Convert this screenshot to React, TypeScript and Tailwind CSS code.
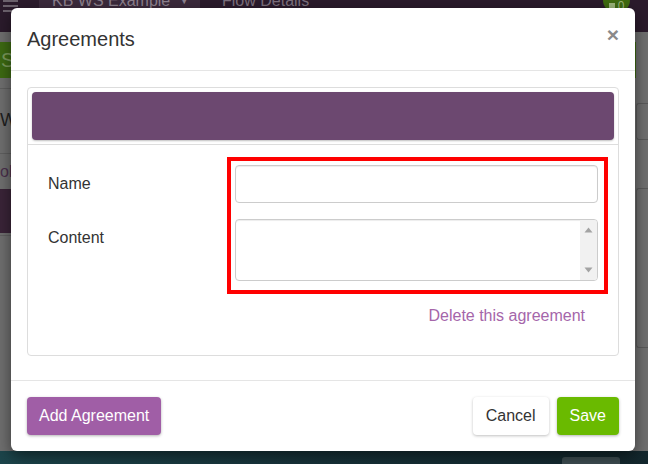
import React from 'react';

const font = { fontFamily: '"Liberation Sans", Arial, sans-serif' };

const Backdrop = () => {
  return (
    <div className="flex h-[464px] w-[648px] flex-col bg-[#6f6f6f]">
      {/* top app bar, dimmed by the modal overlay */}
      <div className="flex h-[32px] items-start overflow-hidden bg-[#2b1b2c]">
        <div className="flex w-[26px] flex-col gap-[3px] pl-[3px]">
          <span className="h-[2px] w-[15px] bg-[#6c626d]" />
          <span className="h-[2px] w-[15px] bg-[#6c626d]" />
          <span className="h-[2px] w-[15px] bg-[#6c626d]" />
        </div>
        <div className="ml-[13px] flex h-[22px] w-[161px] items-start whitespace-nowrap bg-[#3b2a3c] pl-[13px] text-[16px] leading-[22px] text-[#8d818e]">
          <span className="-mt-[10px]">KB WS Example</span>
          <span className="-mt-[10px] ml-[9px] text-[10px]">▼</span>
        </div>
        <div className="ml-[22px] flex h-[22px] items-start whitespace-nowrap text-[16px] leading-[22px] text-[#7d717e]">
          <span className="-mt-[10px]">Flow Details</span>
        </div>
        <div className="ml-auto mr-[18px] flex h-[13px] w-[27px] items-end justify-center gap-[3px] rounded-b-full bg-[#3f6b10] text-[12px] leading-[13px] text-[#9bb57a]">
          <span className="mb-[2px] h-[8px] w-[6px] rounded-b-full bg-[#9bb57a]" />
          <span>0</span>
        </div>
      </div>

      <div className="flex flex-1">
        {/* left strip of the page behind */}
        <div className="flex w-[20px] flex-col">
          <div className="mt-[10px] flex h-[36px] items-center bg-[#3d6a12] pl-[1px] text-[20px] text-[#7c9a5c]">S</div>
          <div className="mt-[10px] h-px bg-[#5f5f5f]" />
          <div className="mt-[20px] text-[18px] leading-[22px] text-[#1f1f1f]">We</div>
          <div className="mt-[22px] h-px bg-[#5f5f5f]" />
          <div className="mt-[8px] text-[16px] leading-[20px] text-[#4a2f4c]">ol</div>
          <div className="mt-[7px] h-[44px] bg-[#3a2438]" />
          <div className="mt-[2px] h-px bg-[#5f5f5f]" />
        </div>
        <div className="flex-1" />
        {/* right strip */}
        <div className="flex w-[20px] flex-col">
          <div className="mt-[10px] h-[36px] w-[8px] bg-[#3d6a12]" />
          <div className="ml-[8px] mt-[25px] h-[37px] rounded-l-[3px] border border-r-0 border-[#5a5a5a]" />
          <div className="ml-[8px] mt-[48px] h-[160px] rounded-l-[3px] border border-r-0 border-[#5a5a5a]" />
        </div>
      </div>

      <div className="flex h-[13px] bg-gradient-to-r from-[#1c454b] via-[#173239] to-[#13272d]">
        <div className="ml-[562px] mt-[6px] h-[7px] w-[58px] rounded-t-[3px] bg-[#3d4d51]" />
      </div>
    </div>
  );
};

const ScrollArrow = ({ up }: { up?: boolean }) => (
  <svg width="9" height="6" viewBox="0 0 9 6" className="mx-auto">
    {up ? <path d="M4.5 0.5 L8.5 5.5 L0.5 5.5 Z" fill="#a3a3a3" /> : <path d="M0.5 0.5 L8.5 0.5 L4.5 5.5 Z" fill="#a3a3a3" />}
  </svg>
);

const App = () => {
  return (
    <div className="relative h-[464px] w-[648px] overflow-hidden" style={font}>
      <Backdrop />

      <div className="absolute left-[11px] top-[8px] flex h-[443px] w-[624px] flex-col rounded-[6px] bg-white shadow-[0_5px_15px_rgba(0,0,0,0.5)]">
        {/* header */}
        <div className="flex h-[63px] items-center border-b border-[#e5e5e5] pl-[16px] pr-[16px]">
          <h4 className="text-[20px] leading-[22px] text-[#333]">Agreements</h4>
          <button className="mb-[10px] ml-auto text-[21px] font-bold leading-none text-[#8a8a8a]">×</button>
        </div>

        {/* body */}
        <div className="flex-1 px-[16px] pt-[16px]">
          <div className="rounded-[4px] border border-[#dddddd]">
            <div className="border-b border-[#dddddd] p-[4px]">
              <div className="h-[48px] rounded-[4px] bg-[#6c4870] shadow-[0_1px_2px_rgba(0,0,0,0.25)]" />
            </div>
            <div className="pb-[28px] pl-[20px] pr-[10px] pt-[12px]">
              <div className="flex">
                <div className="flex w-[179px] flex-col text-[16px] leading-[23px] text-[#333]">
                  <label className="mt-[15px]">Name</label>
                  <label className="mt-[31px]">Content</label>
                </div>
                <div className="flex flex-1 flex-col gap-[16px] border-[4px] border-[#ff0000] pb-[9px] pl-[4px] pr-[6px] pt-[4px]">
                  <input
                    type="text"
                    className="h-[38px] w-full rounded-[4px] border border-[#cccccc] px-3 text-[16px] shadow-[inset_0_1px_1px_rgba(0,0,0,0.075)] outline-none"
                  />
                  <div className="flex h-[62px] overflow-hidden rounded-[4px] border border-[#cccccc] shadow-[inset_0_1px_1px_rgba(0,0,0,0.075)]">
                    <textarea className="flex-1 resize-none px-3 py-[6px] text-[16px] outline-none" />
                    <div className="flex w-[17px] flex-col justify-between bg-[#f1f1f1] py-[7px]">
                      <ScrollArrow up />
                      <ScrollArrow />
                    </div>
                  </div>
                </div>
              </div>
              <div className="mt-[10px] flex justify-end pr-[23px]">
                <a className="text-[16px] leading-[23px] text-[#a566aa]">Delete this agreement</a>
              </div>
            </div>
          </div>
        </div>

        {/* footer */}
        <div className="flex items-center border-t border-[#e5e5e5] px-[16px] pb-[16px] pt-[16px]">
          <button className="h-[38px] rounded-[4px] bg-[#a05ea6] px-3 text-[16px] text-white shadow-[0_1px_3px_rgba(0,0,0,0.3)]">
            Add Agreement
          </button>
          <div className="ml-auto flex gap-[8px]">
            <button className="h-[38px] rounded-[4px] bg-white px-[13px] text-[16px] text-[#333] shadow-[0_1px_3px_rgba(0,0,0,0.25)]">
              Cancel
            </button>
            <button className="h-[38px] rounded-[4px] bg-[#6aba00] px-[13px] text-[16px] text-white shadow-[0_1px_3px_rgba(0,0,0,0.3)]">
              Save
            </button>
          </div>
        </div>
      </div>
    </div>
  );
};

export default App;
